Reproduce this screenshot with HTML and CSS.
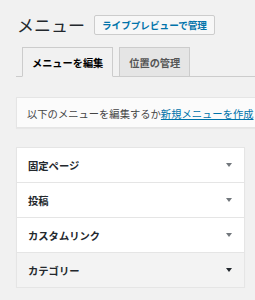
FILE: index.html
```html
<!DOCTYPE html>
<html lang="ja">
<head>
    <meta charset="UTF-8">
    <meta name="viewport" content="width=device-width, initial-scale=1.0">
    <title>メニュー</title>
    <link rel="stylesheet" href="styles.css">
</head>
<body>
    <div class="wrap">
        <div class="page-head">
            <h1 class="page-title">メニュー</h1>
            <a class="title-action" href="#">ライブプレビューで管理</a>
        </div>

        <div class="nav-tabs">
            <a class="nav-tab nav-tab-active" href="#">メニューを編集</a>
            <a class="nav-tab" href="#">位置の管理</a>
        </div>

        <div class="manage-menus">
            以下のメニューを編集するか<a href="#">新規メニューを作成</a>してください。
        </div>

        <ul class="accordion">
            <li class="accordion-section"><h3>固定ページ</h3><span class="arrow"></span></li>
            <li class="accordion-section"><h3>投稿</h3><span class="arrow"></span></li>
            <li class="accordion-section"><h3>カスタムリンク</h3><span class="arrow"></span></li>
            <li class="accordion-section hover"><h3>カテゴリー</h3><span class="arrow"></span></li>
        </ul>
    </div>
</body>
</html>
```

FILE: styles.css
```css
body {
    margin: 0;
    padding: 0;
    background-color: #f1f1f1;
    font-family: "Noto Sans CJK JP", "Liberation Sans", sans-serif;
    color: #444;
    overflow: hidden;
}

.wrap {
    padding: 15px 0 0 16px;
}

.page-head {
    display: flex;
    align-items: center;
    gap: 9px;
    height: 20px;
}

.page-title {
    margin: 0 0 0 1px;
    font-size: 17px;
    font-weight: 400;
    line-height: 20px;
    color: #23282d;
}

.title-action {
    display: flex;
    align-items: center;
    height: 18px;
    padding: 0 7px;
    border: 1px solid #ccc;
    border-radius: 2px;
    background: #f7f7f7;
    color: #0073aa;
    font-size: 9.6px;
    font-weight: 700;
    text-decoration: none;
    white-space: nowrap;
}

.nav-tabs {
    display: flex;
    gap: 6px;
    margin-top: 12px;
    padding-left: 6px;
    border-bottom: 1px solid #ccc;
}

.nav-tab {
    display: flex;
    align-items: center;
    height: 28px;
    padding: 0 9px;
    margin-bottom: -1px;
    border: 1px solid #ccc;
    border-bottom: none;
    background: #e5e5e5;
    color: #555;
    font-size: 10.2px;
    font-weight: 700;
    text-decoration: none;
    white-space: nowrap;
}

.nav-tab-active {
    background: #f1f1f1;
    color: #000;
    border-bottom: 1px solid #f1f1f1;
}

.manage-menus {
    margin-top: 20px;
    height: 31px;
    line-height: 31px;
    padding-left: 10px;
    background: #fbfbfb;
    border: 1px solid #e5e5e5;
    border-right: none;
    box-shadow: 0 1px 1px rgba(0, 0, 0, 0.04);
    font-size: 10.3px;
    white-space: nowrap;
    overflow: hidden;
    box-sizing: border-box;
}

.manage-menus a {
    color: #0073aa;
}

.accordion {
    list-style: none;
    margin: 19px 10px 0 0;
    padding: 0;
    border: 1px solid #e5e5e5;
    box-shadow: 0 1px 1px rgba(0, 0, 0, 0.04);
    background: #fff;
}

.accordion-section {
    display: flex;
    align-items: center;
    justify-content: space-between;
    height: 34px;
    padding: 0 12px 0 11px;
    border-top: 1px solid #e5e5e5;
}

.accordion-section:first-child {
    border-top: none;
}

.accordion-section h3 {
    margin: 0;
    font-size: 10.3px;
    font-weight: 600;
    color: #23282d;
}

.arrow {
    width: 0;
    height: 0;
    border-left: 3px solid transparent;
    border-right: 3px solid transparent;
    border-top: 4px solid #72777c;
}

.accordion-section.hover {
    background: #f3f3f3;
}

.accordion-section.hover .arrow {
    border-top-color: #23282d;
}
```
